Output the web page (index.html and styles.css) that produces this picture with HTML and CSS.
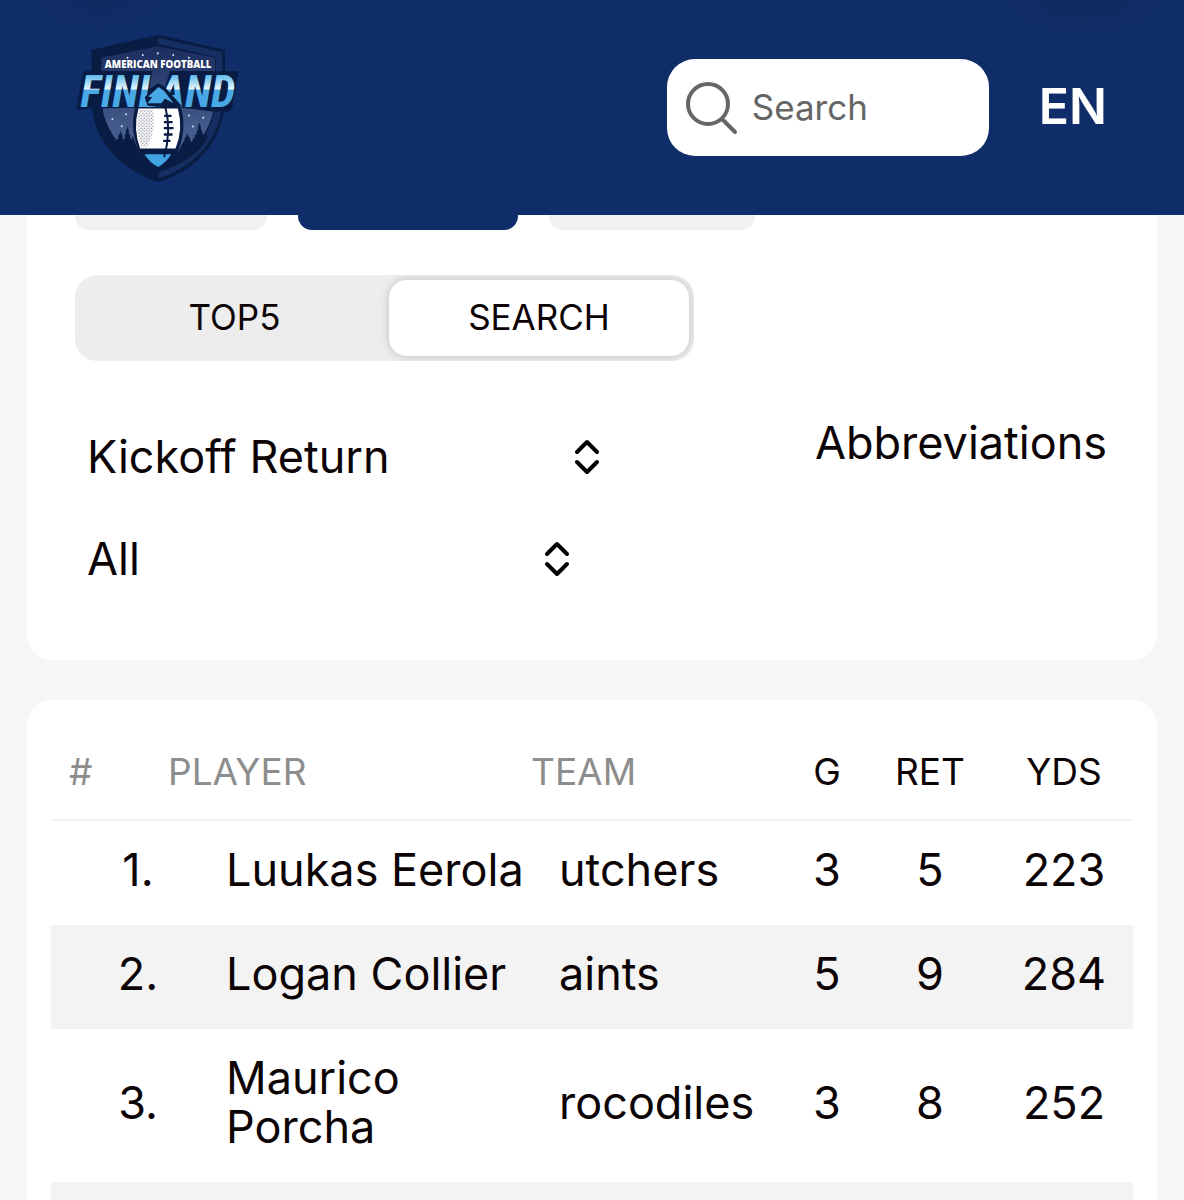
FILE: index.html
```html
<!DOCTYPE html>
<html lang="en">
<head>
    <meta charset="UTF-8">
    <meta name="viewport" content="width=device-width, initial-scale=1.0">
    <title>American Football Finland - Statistics</title>
    <link rel="stylesheet" href="styles.css">
</head>
<body>
    <header class="header">
        <a class="logo" href="#" aria-label="American Football Finland">
            <svg viewBox="45 35 500 455" aria-hidden="true">
                <defs>
                    <linearGradient id="letters" x1="0" y1="162" x2="0" y2="264" gradientUnits="userSpaceOnUse">
                        <stop offset="0" stop-color="#56b8ec"/>
                        <stop offset="0.42" stop-color="#e6f6fd"/>
                        <stop offset="0.47" stop-color="#48a9e6"/>
                        <stop offset="1" stop-color="#48a9e6"/>
                    </linearGradient>
                    <linearGradient id="sky" x1="0" y1="90" x2="0" y2="400" gradientUnits="userSpaceOnUse">
                        <stop offset="0" stop-color="#1d2f60"/>
                        <stop offset="0.7" stop-color="#415889"/>
                        <stop offset="1" stop-color="#4b6394"/>
                    </linearGradient>
                    <pattern id="dots" width="10" height="10" patternUnits="userSpaceOnUse">
                        <circle cx="3" cy="3" r="2" fill="#6b7180"/>
                        <circle cx="8" cy="8" r="2" fill="#6b7180"/>
                    </pattern>
                </defs>

                <!-- shield -->
                <path d="M294 43 L494 89 V230 C496 340 425 445 294 484 C165 440 92 345 94 230 V89 Z" fill="#081c44"/>
                <path d="M294 52 L486 96 V232 C486 335 420 435 294 474 V456 C405 415 466 325 466 232 V110 L294 71 Z" fill="#152f62"/>
                <path d="M294 78 L464 112 V225 C464 320 405 405 294 450 C183 405 124 320 124 225 V112 Z" fill="url(#sky)"/>
                <g fill="#cfe6f8">
                    <circle cx="202" cy="112" r="3"/><circle cx="248" cy="104" r="3"/>
                    <circle cx="293" cy="99" r="3"/><circle cx="339" cy="104" r="3"/>
                    <circle cx="386" cy="112" r="3"/><circle cx="157" cy="296" r="3"/>
                    <circle cx="198" cy="281" r="3"/><circle cx="185" cy="317" r="3"/>
                    <circle cx="386" cy="285" r="3"/><circle cx="429" cy="292" r="3"/>
                    <circle cx="398" cy="318" r="3"/>
                </g>

                <!-- trees -->
                <path d="M150 372 L156 358 L162 368 L167 362 L172 364 L170 358 L176 350 L173 348 L179 340 L181 330 L184 340 L189 348 L186 350 L191 358 L196 348 L193 346 L199 336 L197 334 L202 318 L207 334 L205 336 L211 346 L209 348 L215 358 L218 346 L223 362 L240 400 L294 432 L350 400 L368 366 L374 358 L372 354 L378 348 L381 338 L385 348 L391 356 L389 358 L395 364 L400 350 L405 352 L403 346 L410 338 L408 336 L414 326 L412 324 L418 306 L423 324 L421 326 L428 336 L426 338 L433 346 L436 334 L440 348 L446 345 C420 400 370 430 294 455 C220 430 180 400 150 372 Z" fill="#081c44"/>

                <!-- ball -->
                <path d="M226 258 Q206 330 240 400 L294 445 L350 400 Q382 330 362 258 Z" fill="#081c44"/>
                <path d="M235 264 H353 Q370 325 346 384 H240 Q218 325 235 264 Z" fill="#fff"/>
                <path d="M237 268 H278 Q290 325 262 378 H243 Q224 325 237 268 Z" fill="url(#dots)"/>
                <path d="M253 401 H333 Q318 426 294 439 Q268 426 253 401 Z" fill="#3fa3e2"/>
                <path d="M316 262 Q334 330 312 410" fill="none" stroke="#081c44" stroke-width="6"/>
                <path d="M312 286 H334 M311 305 H337 M311 323 H340 M311 342 H337 M309 361 H331" stroke="#081c44" stroke-width="7"/>

                <text class="logo-small" x="294" y="143" text-anchor="middle">AMERICAN FOOTBALL</text>

                <!-- name plate -->
                <path d="M80 152 H276 L268 206 L294 188 L314 200 L330 152 H528 Q536 152 533 162 L516 262 Q513 274 500 274 H462 L365 262 H228 L90 264 L56 268 Q48 268 50 258 L68 164 Q70 152 80 152 Z" fill="#081c44"/>
                <text class="logo-big" x="293" y="261" text-anchor="middle" fill="url(#letters)">FINLAND</text>

                <!-- mountain between L and A -->
                <path d="M254 230 L294 190 L318 204 L366 258 L330 262 L262 256 Z" fill="#081c44"/>
                <path d="M264 228 L295 200 L312 212 L340 248 L314 234 L304 248 L262 248 L276 230 Z" fill="#48a9e6"/>
            </svg>
        </a>
        <label class="search">
            <svg class="search-icon" viewBox="0 0 54 54" aria-hidden="true">
                <circle cx="23" cy="23" r="20"/>
                <path d="M37 38 L50 51"/>
            </svg>
            <input type="search" placeholder="Search" aria-label="Search">
        </label>
        <button class="language" type="button">EN</button>
    </header>

    <main class="content">
        <section class="card filters">
            <div class="tabs">
                <button class="tab" type="button" aria-label="Previous category"></button>
                <button class="tab tab-active" type="button" aria-label="Current category"></button>
                <button class="tab" type="button" aria-label="Next category"></button>
            </div>

            <div class="switch">
                <button class="switch-item" type="button">TOP5</button>
                <button class="switch-item switch-active" type="button">SEARCH</button>
            </div>

            <div class="filter-row">
                <div class="selects">
                    <div class="select select-wide">
                        <select aria-label="Statistic">
                            <option>Kickoff Return</option>
                        </select>
                        <svg viewBox="0 0 26 36" aria-hidden="true"><path d="M3 13 L13 3 L23 13 M3 23 L13 33 L23 23"/></svg>
                    </div>
                    <div class="select">
                        <select aria-label="Team">
                            <option>All</option>
                        </select>
                        <svg viewBox="0 0 26 36" aria-hidden="true"><path d="M3 13 L13 3 L23 13 M3 23 L13 33 L23 23"/></svg>
                    </div>
                </div>
                <a class="abbreviations" href="#">Abbreviations</a>
            </div>
        </section>

        <section class="card results">
            <table>
                <colgroup>
                    <col class="col-rank">
                    <col class="col-player">
                    <col>
                    <col class="col-games">
                    <col class="col-returns">
                    <col class="col-yards">
                </colgroup>
                <thead>
                    <tr>
                        <th class="rank">#</th>
                        <th>PLAYER</th>
                        <th>TEAM</th>
                        <th class="stat">G</th>
                        <th class="stat">RET</th>
                        <th class="stat">YDS</th>
                    </tr>
                </thead>
                <tbody>
                    <tr>
                        <td class="rank">1.</td>
                        <td class="player">Luukas Eerola</td>
                        <td class="team">utchers</td>
                        <td class="stat">3</td>
                        <td class="stat">5</td>
                        <td class="stat">223</td>
                    </tr>
                    <tr>
                        <td class="rank">2.</td>
                        <td class="player">Logan Collier</td>
                        <td class="team">aints</td>
                        <td class="stat">5</td>
                        <td class="stat">9</td>
                        <td class="stat">284</td>
                    </tr>
                    <tr>
                        <td class="rank">3.</td>
                        <td class="player">Maurico Porcha</td>
                        <td class="team">rocodiles</td>
                        <td class="stat">3</td>
                        <td class="stat">8</td>
                        <td class="stat">252</td>
                    </tr>
                    <tr>
                        <td class="rank"></td>
                        <td class="player"></td>
                        <td class="team"></td>
                        <td class="stat"></td>
                        <td class="stat"></td>
                        <td class="stat"></td>
                    </tr>
                </tbody>
            </table>
        </section>
    </main>
</body>
</html>
```
FILE: styles.css
```css
* {
  box-sizing: border-box;
  margin: 0;
}

body {
  height: 100vh;
  overflow: hidden;
  background-color: #f6f6f6;
  color: #0b0304;
  font-family: Inter, "Open Sans", sans-serif;
  font-size: 45px;
  line-height: 49px;
}

button, input, select {
  font: inherit;
  color: inherit;
  border: none;
  background: none;
  padding: 0;
}

button {
  cursor: pointer;
}

a {
  color: inherit;
  text-decoration: none;
}

.header {
  position: fixed;
  top: 0;
  left: 0;
  right: 0;
  z-index: 1;
  height: 215px;
  padding: 0 77px 0 75px;
  display: flex;
  align-items: center;
  background: radial-gradient(90px 40px at 1084px 0, #0e2a5e, transparent),
    radial-gradient(90px 40px at 100px 0, #0e2b62, transparent), #0f2d69;
}

.logo {
  width: 167px;
  margin-right: auto;
}

.logo svg {
  display: block;
  width: 100%;
}

.logo-small {
  fill: #fff;
  font-family: "Open Sans", sans-serif;
  font-size: 29px;
  font-weight: 800;
}

.logo-big {
  font-family: "Liberation Sans Narrow", "Roboto Condensed", "DejaVu Sans Condensed", sans-serif;
  font-size: 132px;
  font-weight: 700;
  font-style: italic;
}

.search {
  display: flex;
  align-items: center;
  gap: 13px;
  width: 322px;
  height: 97px;
  padding: 0 18px;
  border-radius: 28px;
  background-color: #fff;
  color: #666;
}

.search-icon {
  flex: none;
  width: 54px;
  fill: none;
  stroke: #666;
  stroke-width: 4;
  stroke-linecap: round;
}

.search input {
  width: 100%;
  min-width: 0;
  font-size: 35px;
  outline: none;
}

.search input::placeholder {
  color: #666;
  opacity: 1;
}

.language {
  margin-left: 50px;
  padding-bottom: 3px;
  color: #fff;
  font-size: 50px;
  font-weight: 600;
}

.content {
  display: flex;
  flex-direction: column;
  gap: 40px;
  padding: 120px 27px 0;
}

.card {
  border-radius: 26px;
  background-color: #fff;
}

.filters {
  padding: 48px 50px 70px 48px;
}

.tabs {
  display: flex;
  gap: 31px;
}

.tab {
  width: 192px;
  height: 62px;
  border-radius: 14px;
  background-color: #f1f1f1;
}

.tab-active {
  width: 220px;
  background-color: #0f2d69;
}

.tab:last-child {
  width: 206px;
}

.switch {
  display: grid;
  grid-template-columns: 1fr 300px;
  width: 619px;
  height: 86px;
  margin-top: 45px;
  padding: 5px;
  border-radius: 22px;
  background-color: #ededed;
  overflow: hidden;
  font-size: 35px;
}

.switch-item {
  padding-bottom: 2px;
}

.switch-active {
  border-radius: 18px;
  background-color: #fff;
  box-shadow: 0 0 10px rgba(0, 0, 0, 0.2);
}

.filter-row {
  display: flex;
  justify-content: space-between;
  align-items: flex-start;
  margin-top: 57px;
}

.selects {
  display: flex;
  flex-direction: column;
  gap: 40px;
  padding-top: 8px;
}

.select {
  display: grid;
  align-items: center;
  width: 507px;
}

.select-wide {
  width: 537px;
}

.select select,
.select svg {
  grid-area: 1 / 1;
}

.select select {
  width: 100%;
  height: 62px;
  padding: 0 50px 2px 12px;
  appearance: none;
}

.select svg {
  justify-self: end;
  width: 26px;
  margin-right: 12px;
  fill: none;
  stroke: #000;
  stroke-width: 4;
  stroke-linecap: round;
  stroke-linejoin: round;
  pointer-events: none;
}

.results {
  padding: 24px;
}

table {
  width: 100%;
  table-layout: fixed;
  border-collapse: collapse;
}

.col-rank {
  width: 117px;
}

.col-player {
  width: 363px;
}

.col-games {
  width: 76px;
}

.col-returns {
  width: 130px;
}

.col-yards {
  width: 138px;
}

th {
  height: 96px;
  padding: 0;
  border-bottom: 2px solid #f1f1f1;
  color: #8d8d8d;
  font-size: 37px;
  font-weight: 400;
  text-align: left;
}

th.rank {
  padding-left: 18px;
}

th.stat {
  color: #0b0304;
}

td {
  height: 104px;
  padding: 24px 0 31px;
}

tbody tr:nth-child(even) {
  background-color: #f3f3f3;
}

td.rank {
  padding-left: 57px;
  text-align: center;
}

.player {
  padding-left: 58px;
}

.team {
  padding-left: 28px;
}

.stat {
  text-align: center;
}
```
